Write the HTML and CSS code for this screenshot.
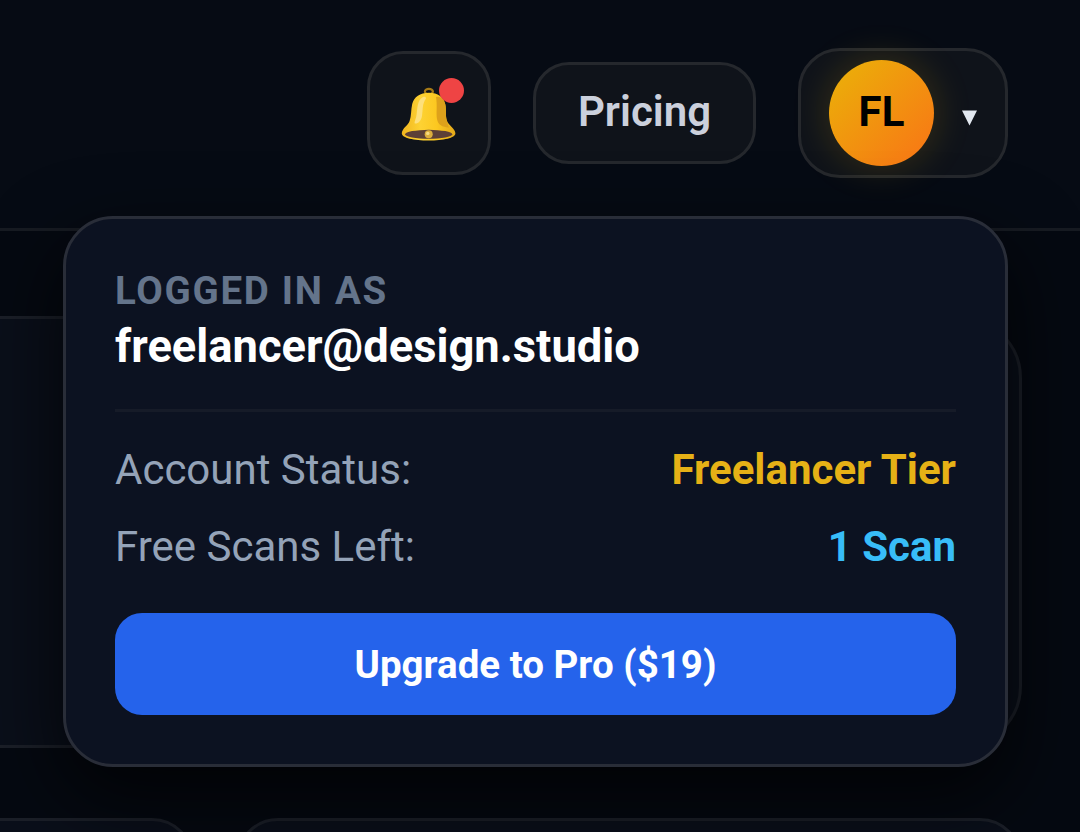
FILE: index.html
```html
<!DOCTYPE html>
<html lang="en">
<head>
    <meta charset="UTF-8">
    <title>Account</title>
    <link rel="stylesheet" href="styles.css">
</head>
<body>
    <header class="header">
        <button type="button" class="nav-button bell-button">
            <svg class="bell-icon" viewBox="0 0 58 58">
                <defs>
                    <linearGradient id="bellGold" x1="0" y1="0" x2="1" y2="0">
                        <stop offset="0" stop-color="#f0b51e"/>
                        <stop offset="0.35" stop-color="#fdd233"/>
                        <stop offset="0.65" stop-color="#fcc820"/>
                        <stop offset="1" stop-color="#e3a81a"/>
                    </linearGradient>
                </defs>
                <ellipse cx="28.9" cy="6.6" rx="4" ry="2.8" fill="none" stroke="#a67a16" stroke-width="2.2"/>
                <path d="M29 7.8C20 7.8 14 12 12.2 19C10.8 25 11.5 31 9.6 36C8 40.5 1.8 43.6 1.8 48.6C1.8 53 14 55.6 28.7 55.6S55.4 53 55.4 48.6C55.4 43.6 49 41 47 36C45.2 31 46.6 25 45.2 19C43.4 12 38 7.8 29 7.8Z" fill="url(#bellGold)"/>
                <path d="M36 12C37.5 20 36 28 37 34C38 40 42 42 49 42.500C48 40.500 47.500 38 47 36C45.200 31 46.600 25 45.200 19C44 14.500 40.500 11 36 12Z" fill="#dda11b"/>
                <path d="M23 12C17 15 17.500 24 16.500 30C16 34 14 37 14.800 38.500C18 39 21 36 22 31C23 25 22 19 26 13.500C26 11.500 24.500 11.300 23 12Z" fill="#fde07c"/>
                <ellipse cx="28.700" cy="49.300" rx="23.500" ry="4.500" fill="#5d4037"/>
                <circle cx="28.700" cy="49.300" r="4" fill="#dcae3d"/>
                <circle cx="27.800" cy="48.400" r="1.700" fill="#f7dc85"/>
            </svg>
            <span class="bell-dot"></span>
        </button>
        <button type="button" class="nav-button pricing-button">Pricing</button>
        <div class="profile">
            <button type="button" class="nav-button profile-button">
                <span class="avatar">FL</span>
                <svg class="caret" viewBox="0 0 15 16"><path d="M0 0.5H15L7.5 15.5Z"/></svg>
            </button>
            <div class="profile-menu">
                <div class="menu-user">
                    <div class="menu-label">LOGGED IN AS</div>
                    <div class="menu-email">freelancer@design.studio</div>
                </div>
                <div class="menu-row">
                    <span>Account Status:</span>
                    <span class="tier">Freelancer Tier</span>
                </div>
                <div class="menu-row">
                    <span>Free Scans Left:</span>
                    <span class="scans">1 Scan</span>
                </div>
                <button type="button" class="upgrade-button">Upgrade to Pro ($19)</button>
            </div>
        </div>
    </header>

    <main class="content">
        <div class="card card-hero"></div>
        <div class="card-row">
            <div class="card"></div>
            <div class="card"></div>
        </div>
    </main>
</body>
</html>
```

FILE: styles.css
```css
* {
    box-sizing: border-box;
}

body {
    margin: 0;
    height: 832px;
    overflow: hidden;
    display: flex;
    flex-direction: column;
    background: #050911;
    font-family: Roboto, "Liberation Sans", sans-serif;
}

button {
    font-family: inherit;
    padding: 0;
    border: none;
}

.header {
    height: 231px;
    flex-shrink: 0;
    display: flex;
    align-items: center;
    justify-content: flex-end;
    gap: 42px;
    padding: 0 72px 2px 0;
    background: #060b14;
    border-bottom: 3px solid #171b22;
    position: relative;
    z-index: 2;
}

.nav-button {
    display: flex;
    align-items: center;
    justify-content: center;
    background: #0f131a;
    border: 3px solid #25282d;
    border-radius: 36px;
}

.bell-button {
    width: 124px;
    height: 124px;
    position: relative;
}

.bell-icon {
    width: 58px;
    height: 58px;
    margin-top: 1px;
}

.bell-dot {
    position: absolute;
    top: 24px;
    right: 24px;
    width: 25px;
    height: 25px;
    border-radius: 50%;
    background: #ef4444;
}

.pricing-button {
    width: 223px;
    height: 102px;
    padding-bottom: 3px;
    color: #cbd0dc;
    font-size: 42px;
    font-weight: 600;
}

.profile {
    position: relative;
}

.profile-button {
    width: 210px;
    height: 130px;
    gap: 28px;
    border-radius: 42px;
}

.avatar {
    width: 105px;
    height: 106px;
    display: flex;
    align-items: center;
    justify-content: center;
    padding-bottom: 3px;
    border-radius: 50%;
    background: linear-gradient(135deg, #eab308, #f97316);
    box-shadow: 0 0 39px rgba(234, 179, 8, 0.2);
    color: #000;
    font-size: 42px;
    font-weight: 700;
}

.caret {
    width: 15px;
    height: 16px;
    margin-top: 9px;
    fill: #e2e8f0;
}

.profile-menu {
    position: absolute;
    top: calc(100% + 38px);
    right: 0;
    width: 945px;
    height: 551px;
    padding: 49px;
    background: #0c1221;
    border: 3px solid #292d38;
    border-radius: 50px;
    box-shadow: 0 30px 80px rgba(0, 0, 0, 0.75);
}

.menu-user {
    height: 144px;
    border-bottom: 3px solid #161b28;
}

.menu-label {
    color: #64748b;
    font-size: 38.5px;
    font-weight: 700;
    letter-spacing: 1.7px;
    line-height: 46px;
}

.menu-email {
    color: #fff;
    font-size: 45.3px;
    font-weight: 700;
    line-height: 65px;
}

.menu-row {
    display: flex;
    justify-content: space-between;
    margin-top: 27px;
    color: #94a3b8;
    font-size: 42px;
    line-height: 50px;
}

.menu-user + .menu-row {
    margin-top: 33px;
}

.tier,
.scans {
    font-weight: 700;
}

.tier {
    color: #e6b116;
}

.scans {
    color: #38bdf8;
}

.upgrade-button {
    width: 100%;
    height: 102px;
    margin-top: 41px;
    padding-top: 1px;
    border-radius: 27px;
    background: #2563eb;
    color: #fff;
    font-size: 38.5px;
    font-weight: 700;
}

.content {
    flex: 1;
    min-height: 0;
    overflow: hidden;
    width: 1022px;
    padding-top: 85px;
}

.card {
    background: #0a0f1a;
    border: 3px solid #1b1f28;
    border-radius: 42px;
}

.card-hero {
    height: 432px;
    margin-left: -100px;
    border-radius: 62px;
}

.card-row {
    display: grid;
    grid-template-columns: 1fr 786px;
    gap: 42px;
    margin: 70px 0 0 -592px;
}

.card-row .card {
    height: 220px;
}
```
